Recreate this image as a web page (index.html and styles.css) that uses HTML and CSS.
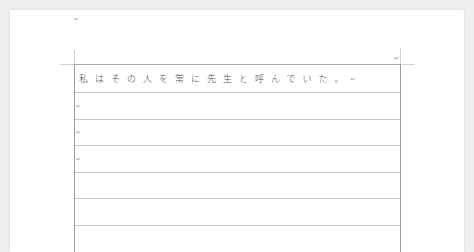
FILE: index.html
```html
<!DOCTYPE html>
<html lang="ja">
<head>
<meta charset="utf-8">
<title>Document</title>
<link rel="stylesheet" href="styles.css">
</head>
<body>
<div class="page">
  <div class="pmark-top"><span class="pm">↵</span></div>
  <div class="table-wrap">
    <span class="crop crop-lv"></span>
    <span class="crop crop-lh"></span>
    <span class="crop crop-rv"></span>
    <span class="crop crop-rh"></span>
    <span class="pm pm-right">↵</span>
    <div class="grid">
      <div class="row row-first"><span class="txt">私はその人を常に先生と呼んでいた。</span><span class="pm pm-inline">↵</span></div>
      <div class="row"><span class="pm">↵</span></div>
      <div class="row"><span class="pm">↵</span></div>
      <div class="row"><span class="pm">↵</span></div>
      <div class="row"></div>
      <div class="row"></div>
      <div class="row"></div>
    </div>
  </div>
</div>
</body>
</html>
```

FILE: styles.css
```css
html, body {
  margin: 0;
  padding: 0;
}
body {
  background: #efefef;
  width: 474px;
  height: 252px;
  overflow: hidden;
  font-family: "Noto Sans CJK JP", "Noto Sans", sans-serif;
}
.page {
  margin: 10px 0 0 10px;
  width: 454px;
  height: 242px;
  background: #ffffff;
  box-shadow: 0 0 2px rgba(0, 0, 0, 0.12);
  overflow: hidden;
}
.pm {
  font-family: "DejaVu Sans", sans-serif;
  font-size: 6px;
  color: #9a9a9a;
}
.pmark-top {
  padding-left: 64px;
  height: 8px;
  line-height: 8px;
}
.table-wrap {
  position: relative;
  margin-top: 46px;
  margin-left: 64px;
  width: 327px;
}
.crop {
  position: absolute;
  background: #d2d2d2;
}
.crop-lv {
  left: 0;
  top: -14px;
  width: 1px;
  height: 14px;
}
.crop-lh {
  left: -14px;
  top: 0;
  width: 14px;
  height: 1px;
}
.crop-rv {
  left: 326px;
  top: -16px;
  width: 1px;
  height: 16px;
}
.crop-rh {
  left: 327px;
  top: 0;
  width: 14px;
  height: 1px;
}
.pm-right {
  position: absolute;
  left: 320px;
  top: -10px;
  line-height: 8px;
}
.grid {
  border-top: 1px solid #a9a9a9;
  border-left: 1px solid #9c9c9c;
  border-right: 1px solid #9c9c9c;
}
.row {
  display: flex;
  align-items: center;
  height: 25.6px;
  border-bottom: 1px solid #cacaca;
  padding-left: 1px;
  line-height: 1;
}
.row-first {
  height: 27px;
  padding-left: 4px;
}
.txt {
  font-size: 9px;
  font-weight: 300;
  letter-spacing: 7px;
  color: #4a4a4a;
}
```
